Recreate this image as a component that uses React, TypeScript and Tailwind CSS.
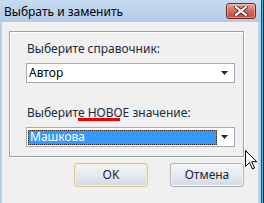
import React from "react"

const font = { fontFamily: '"Noto Sans", "Liberation Sans", sans-serif' }

const Arrow = () => (
  <svg width="7" height="4" viewBox="0 0 7 4" className="block">
    <path d="M0 0H7L3.5 4Z" fill="#1f2a38" />
  </svg>
)

const Cursor = () => (
  <svg width="13" height="20" viewBox="0 0 13 20" className="block">
    <path
      d="M0.5 0.5V16.5L4.5 12.5L7.5 19L9.5 18L6.7 11.7H11.8Z"
      fill="#fff"
      stroke="#000"
      strokeWidth="1"
      strokeLinejoin="miter"
    />
  </svg>
)

const CloseButton = () => (
  <div className="w-[30px] h-[16px] rounded-[3px] border border-[#6b2b26] bg-gradient-to-b from-[#e9a99b] via-[#d26a5a] to-[#c2483a] flex items-center justify-center shadow-[inset_0_0_0_1px_rgba(255,220,210,0.45)]">
    <svg width="14" height="10" viewBox="0 0 14 10">
      <path d="M2 1L12 9M12 1L2 9" stroke="#5a2a26" strokeWidth="4" strokeLinecap="square" />
      <path d="M2 1L12 9M12 1L2 9" stroke="#fff" strokeWidth="2.2" strokeLinecap="square" />
    </svg>
  </div>
)

const Button = ({ label, focused }: { label: string; focused?: boolean }) => (
  <div
    className={
      "w-[74px] h-[24px] rounded-[3px] border flex items-center justify-center text-[12px] text-[#1b2738] bg-gradient-to-b from-[#f3f4f7] via-[#e6e9ef] to-[#d3d9e3] " +
      (focused ? "border-[#dcc58e] shadow-[inset_0_0_0_1px_#f6ecd0]" : "border-[#acb2bb] shadow-[inset_0_0_0_1px_#f7f8fa]")
    }
  >
    {label}
  </div>
)

export default function App() {
  return (
    <div className="w-[264px] h-[203px] flex bg-[#0e1a26] overflow-hidden" style={font}>
      <div className="w-[261px] h-full flex flex-col">
        {/* title bar */}
        <div className="h-[22px] flex items-center justify-between bg-gradient-to-b from-[#c6dbf0] to-[#b1cbe7] pl-[4px] pr-[5px]">
          <span className="text-[12px] leading-[16px] text-black mt-[1px]">Выбрать и заменить</span>
          <CloseButton />
        </div>
        <div className="flex-1 flex">
          <div className="w-[2px] bg-[#b8d0ea]" />
          <div className="flex-1 bg-[#f0f0f0] relative">
            {/* group box */}
            <div className="ml-[7px] mt-[9px] w-[235px] h-[126px] border border-[#a0a0a0] shadow-[inset_1px_1px_0_#fff,1px_1px_0_#fff] pl-[16px] pt-[9px] flex flex-col text-[12px] text-[#1c2a3a]">
              <div className="h-[16px] leading-[16px] ml-[1px]">Выберите справочник:</div>
              <div className="mt-[6px] w-[209px] h-[20px] border border-[#a3abb9] bg-white flex items-center justify-between pl-[2px] pr-[6px]">
                <span className="leading-[16px] text-black">Автор</span>
                <Arrow />
              </div>
              <div className="mt-[22px] h-[16px] leading-[16px] ml-[1px] relative">
                Выберите <span className="relative">НОВОЕ</span> значение:
                <div className="absolute left-[51px] top-[13px] w-[42px] h-[3px] bg-[#e80000]" />
              </div>
              <div className="mt-[6px] w-[209px] h-[20px] border border-[#a3abb9] bg-white flex items-center justify-between pl-[1px] pr-[6px]">
                <div className="w-[189px] h-[15px] bg-[#3399ff] border border-dotted border-[#3a2410] flex items-center pl-[1px]">
                  <span className="leading-[14px] text-white">Машкова</span>
                </div>
                <Arrow />
              </div>
            </div>
            {/* buttons */}
            <div className="ml-[7px] mt-[6px] w-[235px] flex justify-end gap-[22px]">
              <Button label="OK" focused />
              <Button label="Отмена" />
            </div>
            <div className="absolute left-[243px] top-[128px]">
              <Cursor />
            </div>
          </div>
          <div className="w-[3px] bg-[#bcd3ec]" />
        </div>
      </div>
      <div className="w-[1px] h-full bg-[#2a4258]" />
      <div className="w-[1px] h-full bg-[#3ec2f0]" />
      <div className="w-[1px] h-full bg-[#0e1a26]" />
    </div>
  )
}
